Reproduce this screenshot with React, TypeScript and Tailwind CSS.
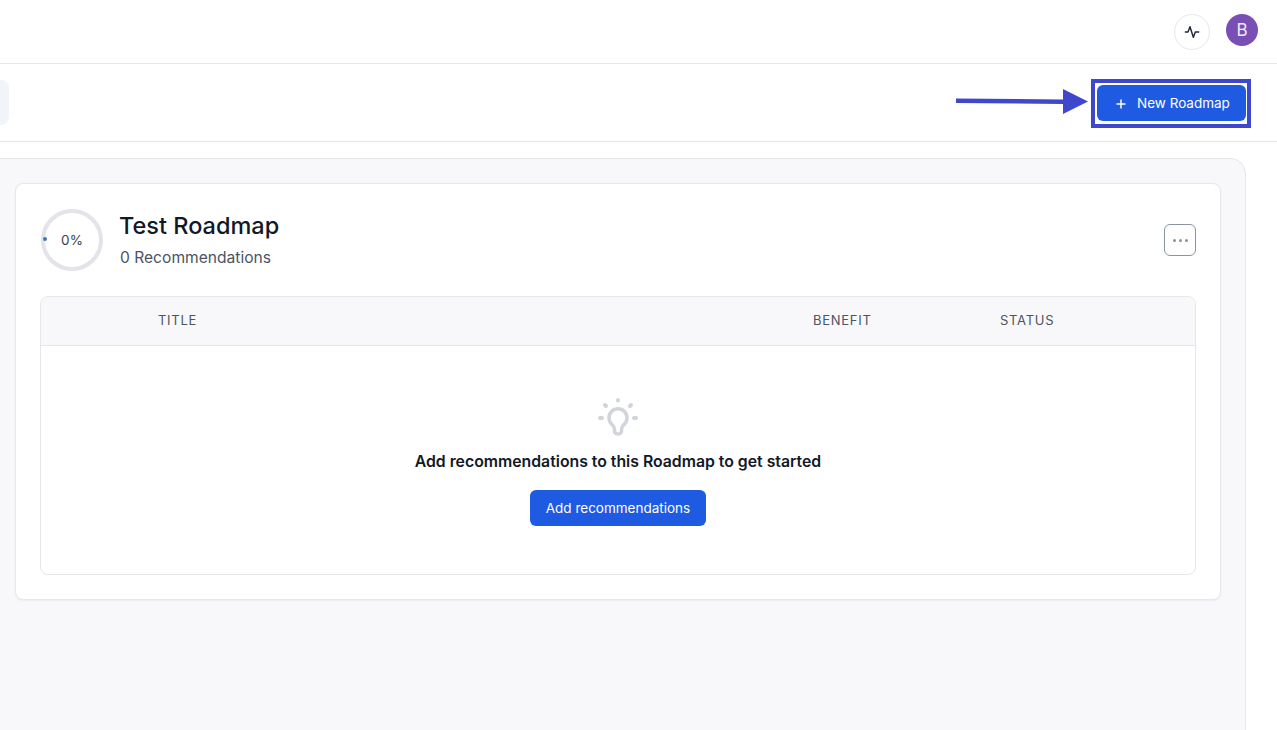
import React from "react";

function App() {
  return (
    <div className="relative w-[1277px] h-[730px] overflow-hidden bg-white text-[#111827] font-['Inter',sans-serif]">
      <header className="h-[64px] border-b border-[#e5e7eb] flex items-start justify-end gap-4 pt-[14px] pr-[19px]">
        <div className="w-9 h-9 rounded-full border border-[#e2e8f0] flex items-center justify-center">
          <svg width="16" height="16" viewBox="0 0 24 24" fill="none" stroke="#1e293b" strokeWidth="2.2" strokeLinecap="round" strokeLinejoin="round">
            <path d="M2 12h4l3-8 5 16 3-8h5" />
          </svg>
        </div>
        <div className="w-8 h-8 rounded-full bg-[#7a4fb5] text-[#f1eaf9] flex items-center justify-center pt-px text-[17px]">B</div>
      </header>

      <div className="h-[78px] border-b border-[#e5e7eb] flex items-start justify-between pt-[21px] pr-[31px]">
        <div className="w-[9px] h-[45px] -mt-[5px] bg-[#f1f5f9] rounded-r-lg" />
        <button className="w-[149px] h-9 rounded-md bg-[#1f5ae3] text-white flex items-center pl-[18px] pt-px">
          <svg width="12" height="12" viewBox="0 0 12 12" fill="none" stroke="white" strokeWidth="1.5"><path d="M6 1.500v9M1.500 6h9" /></svg>
          <span className="ml-[10px] text-[13.5px]">New Roadmap</span>
        </button>
      </div>

      <main className="mt-4 w-[1246px] h-[572px] bg-[#f8f8fa] border-t border-r border-[#e5e7eb] rounded-tr-2xl pl-[15px] pt-6">
        <section className="w-[1206px] h-[417px] bg-white border border-[#e5e7eb] rounded-lg shadow-xs pt-[25px] px-[24px]">
          <div className="flex items-center h-[62px]">
            <div className="relative ml-px w-[62px] h-[62px] rounded-full border-4 border-[#e2e4ea] flex items-center justify-center text-[13.5px] pt-px text-[#374151]">
              0%
              <span className="absolute left-[-2px] top-[24px] w-1 h-1 rounded-full bg-[#3b78c4]" />
            </div>
            <div className="ml-[16px] flex-1 pt-[2px]">
              <div className="text-[23.5px] leading-8 font-medium -mt-[2px]">Test Roadmap</div>
              <div className="text-[15.6px] leading-6 mt-[4px] pl-px text-[#4b5563]">0 Recommendations</div>
            </div>
            <button className="w-8 h-8 rounded-md border border-[#8b93a1] flex items-center justify-center gap-[3px]">
              <span className="w-[3px] h-[3px] rounded-full bg-[#8b93a1]" />
              <span className="w-[3px] h-[3px] rounded-full bg-[#8b93a1]" />
              <span className="w-[3px] h-[3px] rounded-full bg-[#8b93a1]" />
            </button>
          </div>

          <div className="mt-[25px] h-[279px] border border-[#e5e7eb] rounded-lg overflow-hidden">
            <div className="h-[49px] bg-[#f8f8fa] border-b border-[#e5e7eb] flex items-center text-[13px] tracking-[0.055em] text-[#4b5563]">
              <span className="ml-[117px] w-[655px]">TITLE</span>
              <span className="w-[187px]">BENEFIT</span>
              <span>STATUS</span>
            </div>
            <div className="flex flex-col items-center pt-[51px]">
              <svg width="42" height="42" viewBox="0 0 42 42" fill="none" stroke="#d1d5db" strokeLinecap="round" strokeLinejoin="round">
                <path strokeWidth="4" d="M21 3v.500M8 8l1 1M34 8l-1 1M3 21h2M37 21h2" />
                <path strokeWidth="3.500" d="M17.500 32c0-2-1-3-2.500-4.500a9 9 0 1 1 12 0c-1.500 1.500-2.500 2.500-2.500 4.500v2a3 3 0 0 1-3 3h-1a3 3 0 0 1-3-3z" />
              </svg>
              <div className="mt-[11px] text-[15.8px] leading-6 font-semibold whitespace-nowrap">Add recommendations to this Roadmap to get started</div>
              <button className="mt-4 w-[176px] h-9 rounded-md bg-[#1f5ae3] text-white text-[13.5px]">Add recommendations</button>
            </div>
          </div>
        </section>
      </main>

      <div className="absolute left-[1091px] top-[79px] w-[160px] h-[49px] border-[4px] border-[#3f48cc]" />
      <svg className="absolute left-[950px] top-[80px]" width="145" height="40" viewBox="0 0 145 40" fill="#3f48cc">
        <path d="M6 18.500L113 19.500V9L138 21.500L113 34V24L6 23z" />
      </svg>
    </div>
  );
}

export default App;
